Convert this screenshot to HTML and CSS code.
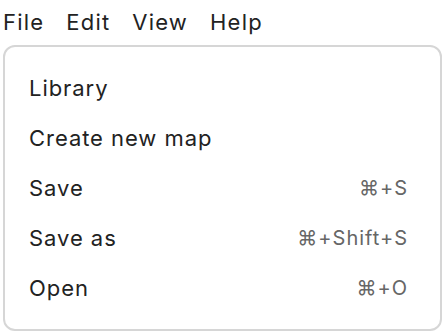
FILE: index.html
```html
<!DOCTYPE html>
<html lang="en">
<head>
  <meta charset="UTF-8" />
  <title>Menu</title>
  <link rel="stylesheet" href="styles.css">
</head>
<body>

  <!-- barra de menus -->
  <nav class="menubar">
    <span>File</span>
    <span>Edit</span>
    <span>View</span>
    <span>Help</span>
  </nav>

  <!-- menu File aberto -->
  <ul class="dropdown">
    <li class="item"><span>Library</span></li>
    <li class="item"><span>Create new map</span></li>
    <li class="item"><span>Save</span><span class="shortcut">⌘+S</span></li>
    <li class="item"><span>Save as</span><span class="shortcut">⌘+Shift+S</span></li>
    <li class="item"><span>Open</span><span class="shortcut">⌘+O</span></li>
  </ul>

</body>
</html>
```

FILE: styles.css
```css
* {
  margin: 0;
  padding: 0;
  box-sizing: border-box;
}

body {
  font-family: Inter, "Noto Sans", sans-serif;
  background: #ffffff;
  color: #222;
  padding: 0 4px 0 3px;
}

.menubar {
  display: flex;
  gap: 22px;
  height: 45px;
  padding-top: 8px;
  font-size: 22px;
  line-height: 28px;
  letter-spacing: 1.2px;
}

.dropdown {
  list-style: none;
  border: 2px solid #d6d6d6;
  border-radius: 12px;
  padding: 16px 0;
}

.item {
  display: flex;
  justify-content: space-between;
  align-items: center;
  height: 50px;
  padding: 0 32px 0 24px;
  font-size: 22px;
  letter-spacing: 0.95px;
}

.shortcut {
  color: #666;
  font-size: 20px;
  letter-spacing: 1px;
}
```
